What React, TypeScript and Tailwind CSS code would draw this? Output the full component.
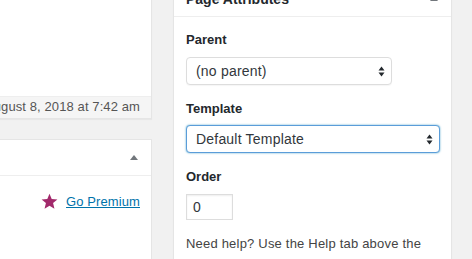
import { FC } from 'react';

const SortArrows: FC = () => (
    <svg width="7" height="11" viewBox="0 0 7 11" className="pointer-events-none">
        <path d="M3.5 0.5 L6.5 4.5 L0.5 4.5 Z" fill="#23282d" />
        <path d="M3.5 10.5 L6.5 6.5 L0.5 6.5 Z" fill="#23282d" />
    </svg>
);

const Toggle: FC = () => (
    <span className="h-0 w-0 border-x-4 border-b-[5px] border-x-transparent border-b-[#72777c]" />
);

const Star: FC = () => (
    <svg width="17" height="17" viewBox="0 0 20 20">
        <path
            d="M10 1 L12.6 7.2 L19.3 7.6 L14.2 11.9 L15.8 18.5 L10 14.9 L4.2 18.5 L5.8 11.9 L0.7 7.6 L7.4 7.2 Z"
            fill="#a2296b"
        />
    </svg>
);

const App: FC = () => {
    return (
        <div className="h-[259px] w-[472px] overflow-hidden bg-[#f1f1f1] font-['Liberation_Sans',Arial,sans-serif] text-[13px] text-[#444]">
            <div className="-mt-[20px] flex gap-[21px]">
                {/* left column, cut at the left edge */}
                <div className="flex w-[152px] flex-none flex-col">
                    <div className="border border-l-0 border-[#e5e5e5] bg-white shadow-[0_1px_1px_rgba(0,0,0,0.04)]">
                        <div className="h-[115px]" />
                        <div className="flex justify-end overflow-hidden whitespace-nowrap border-t border-[#eee] bg-[#f5f5f5] pb-[2px] pr-[11px] leading-[19px] tracking-[0.1px] text-[#555]">
                            Last edited by admin on August 8, 2018 at 7:42 am
                        </div>
                    </div>
                    <div className="mt-[20px] h-[200px] border border-l-0 border-[#e5e5e5] bg-white">
                        <div className="flex h-[36px] items-center justify-end border-b border-[#eee] pr-[13px]">
                            <Toggle />
                        </div>
                        <div className="flex items-center justify-end gap-[8px] pr-[11px] pt-[16px] leading-[19.5px]">
                            <Star />
                            <a href="#" className="tracking-[0.1px] text-[#0073aa] underline">
                                Go Premium
                            </a>
                        </div>
                    </div>
                </div>

                {/* page attributes box */}
                <div className="h-[300px] w-[279px] flex-none border border-[#e5e5e5] bg-white shadow-[0_1px_1px_rgba(0,0,0,0.04)]">
                    <div className="flex h-[36px] items-center justify-between border-b border-[#eee] pl-[12px] pr-[13px]">
                        <h2 className="text-[14px] font-bold leading-[20px] text-[#23282d]">
                            Page Attributes
                        </h2>
                        <Toggle />
                    </div>
                    <div className="px-[12px] pt-[14px]">
                        <p className="font-bold leading-[18px] text-[#23282d]">Parent</p>
                        <div className="mt-[8px] flex h-[28px] w-[206px] items-center justify-between rounded-[4px] border border-[#ddd] bg-white pl-[9px] pr-[6px] text-[14px] tracking-[0.2px] text-[#32373c] shadow-[0_1px_1px_rgba(0,0,0,0.04)]">
                            <span>(no parent)</span>
                            <SortArrows />
                        </div>

                        <p className="mt-[15px] font-bold leading-[18px] text-[#23282d]">Template</p>
                        <div className="mt-[7px] flex h-[28px] w-[254px] items-center justify-between rounded-[4px] border border-[#5b9dd9] bg-white pl-[9px] pr-[6px] text-[14px] tracking-[0.2px] text-[#32373c] shadow-[0_0_2px_rgba(30,140,190,0.8)]">
                            <span>Default Template</span>
                            <SortArrows />
                        </div>

                        <p className="mt-[15px] font-bold leading-[18px] text-[#23282d]">Order</p>
                        <div className="mt-[8px] flex h-[26px] w-[47px] items-center border border-[#ddd] bg-white pl-[6px] text-[14px] text-[#32373c] shadow-[inset_0_1px_2px_rgba(0,0,0,0.07)]">
                            0
                        </div>

                        <p className="mt-[14px] leading-[19.5px] tracking-[0.2px]">
                            Need help? Use the Help tab above the screen title.
                        </p>
                    </div>
                </div>
            </div>
        </div>
    );
};

export default App;
